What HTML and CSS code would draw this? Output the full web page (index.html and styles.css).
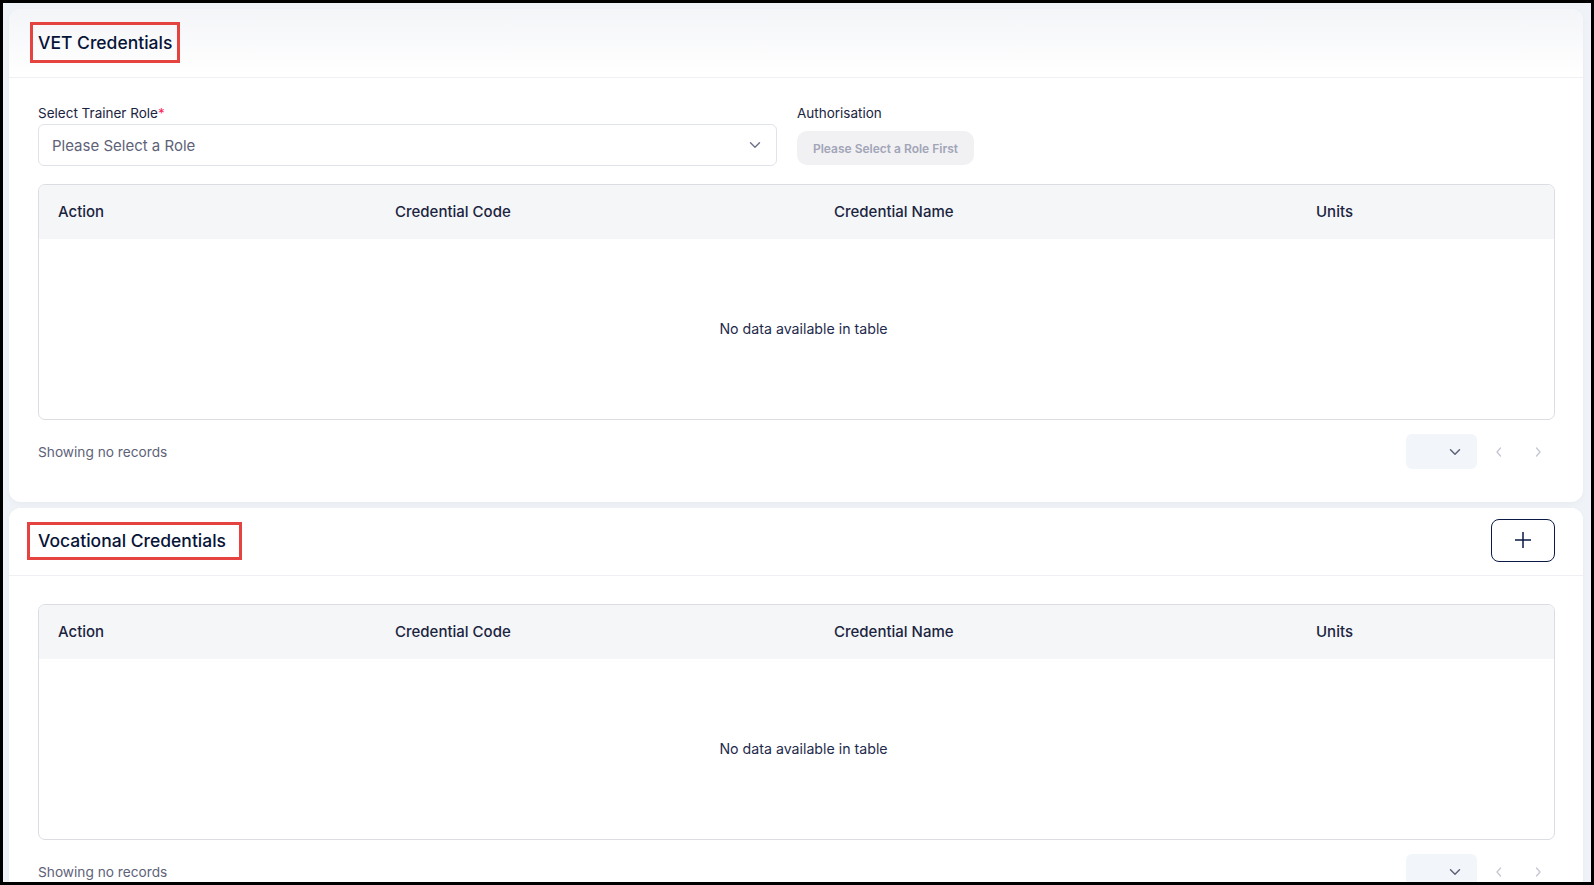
FILE: index.html
```html
<!doctype html>
<html>
    <head>
        <meta charset="utf-8">
        <title>Trainer Credentials</title>
        <link rel="stylesheet" href="styles.css">
    </head>
    <body>
        <div class="frame">
            <section class="card">
                <div class="card-head">
                    <h3 class="card-title title-vet">VET Credentials</h3>
                </div>
                <div class="card-body">
                    <div class="form-row">
                        <div class="field">
                            <label class="field-label">Select Trainer Role<span class="req">*</span></label>
                            <div class="select">
                                <span>Please Select a Role</span>
                                <svg class="chev" width="12" height="8" viewBox="0 0 12 8"><path d="M1.5 1.8 6 6.2l4.5-4.4" fill="none" stroke="#6d7189" stroke-width="1.4" stroke-linecap="round" stroke-linejoin="round"/></svg>
                            </div>
                        </div>
                        <div class="field">
                            <label class="field-label label-auth">Authorisation</label>
                            <button class="btn-muted" disabled>Please Select a Role First</button>
                        </div>
                    </div>

                    <div class="table-wrap">
                        <table class="grid">
                            <thead>
                                <tr>
                                    <th class="col-action">Action</th>
                                    <th class="col-code">Credential Code</th>
                                    <th class="col-name">Credential Name</th>
                                    <th>Units</th>
                                </tr>
                            </thead>
                            <tbody>
                                <tr><td class="empty" colspan="4">No data available in table</td></tr>
                            </tbody>
                        </table>
                    </div>

                    <div class="table-foot">
                        <span class="info">Showing no records</span>
                        <div class="pager">
                            <div class="page-size">
                                <svg width="12" height="8" viewBox="0 0 12 8"><path d="M1.5 1.8 6 6.2l4.5-4.4" fill="none" stroke="#5e6278" stroke-width="1.5" stroke-linecap="round" stroke-linejoin="round"/></svg>
                            </div>
                            <button class="page-btn" disabled><svg width="8" height="12" viewBox="0 0 8 12"><path d="M5.5 2 2 6l3.5 4" fill="none" stroke="#c4c6d4" stroke-width="1.3" stroke-linecap="round" stroke-linejoin="round"/></svg></button>
                            <button class="page-btn" disabled><svg width="8" height="12" viewBox="0 0 8 12"><path d="M2.5 2 6 6l-3.5 4" fill="none" stroke="#c4c6d4" stroke-width="1.3" stroke-linecap="round" stroke-linejoin="round"/></svg></button>
                        </div>
                    </div>
                </div>
            </section>

            <section class="card">
                <div class="card-head head-voc">
                    <h3 class="card-title title-voc">Vocational Credentials</h3>
                    <button class="btn-add">
                        <svg width="18" height="18" viewBox="0 0 18 18"><path d="M9 1v16M1 9h16" fill="none" stroke="#0b1a45" stroke-width="1.5"/></svg>
                    </button>
                </div>
                <div class="card-body">
                    <div class="table-wrap">
                        <table class="grid">
                            <thead>
                                <tr>
                                    <th class="col-action">Action</th>
                                    <th class="col-code">Credential Code</th>
                                    <th class="col-name">Credential Name</th>
                                    <th>Units</th>
                                </tr>
                            </thead>
                            <tbody>
                                <tr><td class="empty" colspan="4">No data available in table</td></tr>
                            </tbody>
                        </table>
                    </div>

                    <div class="table-foot">
                        <span class="info">Showing no records</span>
                        <div class="pager">
                            <div class="page-size">
                                <svg width="12" height="8" viewBox="0 0 12 8"><path d="M1.5 1.8 6 6.2l4.5-4.4" fill="none" stroke="#5e6278" stroke-width="1.5" stroke-linecap="round" stroke-linejoin="round"/></svg>
                            </div>
                            <button class="page-btn" disabled><svg width="8" height="12" viewBox="0 0 8 12"><path d="M5.5 2 2 6l3.5 4" fill="none" stroke="#c4c6d4" stroke-width="1.3" stroke-linecap="round" stroke-linejoin="round"/></svg></button>
                            <button class="page-btn" disabled><svg width="8" height="12" viewBox="0 0 8 12"><path d="M2.5 2 6 6l-3.5 4" fill="none" stroke="#c4c6d4" stroke-width="1.3" stroke-linecap="round" stroke-linejoin="round"/></svg></button>
                        </div>
                    </div>
                </div>
            </section>
        </div>
    </body>
</html>
```

FILE: styles.css
```css
html, body {
    margin: 0;
    padding: 0;
}
body {
    background: #000;
    font-family: Inter, "Noto Sans", sans-serif;
    color: #071437;
}
.frame {
    margin: 3px 3px 0 3px;
    height: 879px;
    overflow: hidden;
    background: #eff2f6;
    padding: 6px 8px 0 6px;
    box-sizing: border-box;
    display: flex;
    flex-direction: column;
    gap: 6px;
}
.card {
    background: #fff;
    border-radius: 12px;
    box-shadow: 0 2px 6px rgba(20, 30, 60, 0.03);
    flex-shrink: 0;
}
.card-head {
    height: 68px;
    border-bottom: 1px solid #eef0f3;
    display: flex;
    align-items: center;
    padding: 0 28px 0 21px;
    background: linear-gradient(#f4f5f8, #fff);
    border-radius: 12px 12px 0 0;
}
.head-voc {
    height: 67px;
    padding-left: 18px;
    justify-content: space-between;
    background: #fff;
}
.card-title {
    margin: 0;
    font-size: 17.5px;
    font-weight: 500;
    color: #071437;
    border: 3px solid #e5433f;
    box-sizing: border-box;
    display: flex;
    align-items: center;
}
.title-vet {
    width: 150px;
    height: 41px;
    padding-left: 5px;
    margin-top: -2px;
}
.title-voc {
    width: 215px;
    height: 38px;
    padding-left: 8px;
    margin-top: -2px;
}
.btn-add {
    width: 64px;
    height: 43px;
    border: 1.5px solid #0b1a45;
    border-radius: 8px;
    background: #fff;
    display: flex;
    align-items: center;
    justify-content: center;
    margin-top: -3px;
    padding: 0;
}
.card-body {
    padding: 26px 28px 33px 29px;
}
.head-voc + .card-body {
    padding-top: 28px;
}
.form-row {
    display: grid;
    grid-template-columns: 739px 1fr;
    gap: 20px;
}
.field-label {
    display: block;
    font-size: 13.5px;
    line-height: 18px;
    color: #1b2440;
    margin-bottom: 2px;
}
.label-auth {
    margin-bottom: 9px;
}
.req {
    color: #f8285a;
}
.select {
    height: 42px;
    border: 1px solid #e1e3ea;
    border-radius: 6px;
    box-sizing: border-box;
    display: flex;
    align-items: center;
    justify-content: space-between;
    padding: 0 15px 0 13px;
    font-size: 15px;
    color: #5e6278;
}
.btn-muted {
    height: 34px;
    width: 177px;
    border: 0;
    border-radius: 10px;
    background: #f1f1f4;
    color: #a1a5b7;
    font-family: inherit;
    font-size: 12px;
    font-weight: 600;
    padding: 0;
}
.table-wrap {
    margin-top: 18px;
    border: 1px solid #dbdde3;
    border-radius: 7px;
    overflow: hidden;
}
.head-voc + .card-body .table-wrap {
    margin-top: 0;
}
.grid {
    width: 100%;
    border-collapse: collapse;
}
.grid th {
    height: 53px;
    background: #f5f6f8;
    text-align: left;
    font-size: 15px;
    font-weight: 500;
    color: #1b2440;
    padding: 0 19px 1px;
}
.col-action {
    width: 299px;
}
.col-code {
    width: 401px;
}
.col-name {
    width: 444px;
}
.grid .empty {
    height: 178px;
    text-align: center;
    font-size: 14.2px;
    color: #1e2a4d;
    padding: 0 0 2px 14px;
}
.table-foot {
    margin-top: 14px;
    display: flex;
    align-items: center;
    justify-content: space-between;
}
.info {
    font-size: 13.7px;
    color: #5e6278;
}
.pager {
    display: flex;
    align-items: center;
    gap: 5px;
}
.page-size {
    width: 71px;
    height: 35px;
    background: #f2f5f9;
    border-radius: 6px;
    display: flex;
    align-items: center;
    justify-content: flex-end;
    padding-right: 16px;
    box-sizing: border-box;
}
.page-btn {
    width: 34px;
    height: 34px;
    border: 0;
    background: none;
    display: flex;
    align-items: center;
    justify-content: center;
    padding: 0;
}
```
